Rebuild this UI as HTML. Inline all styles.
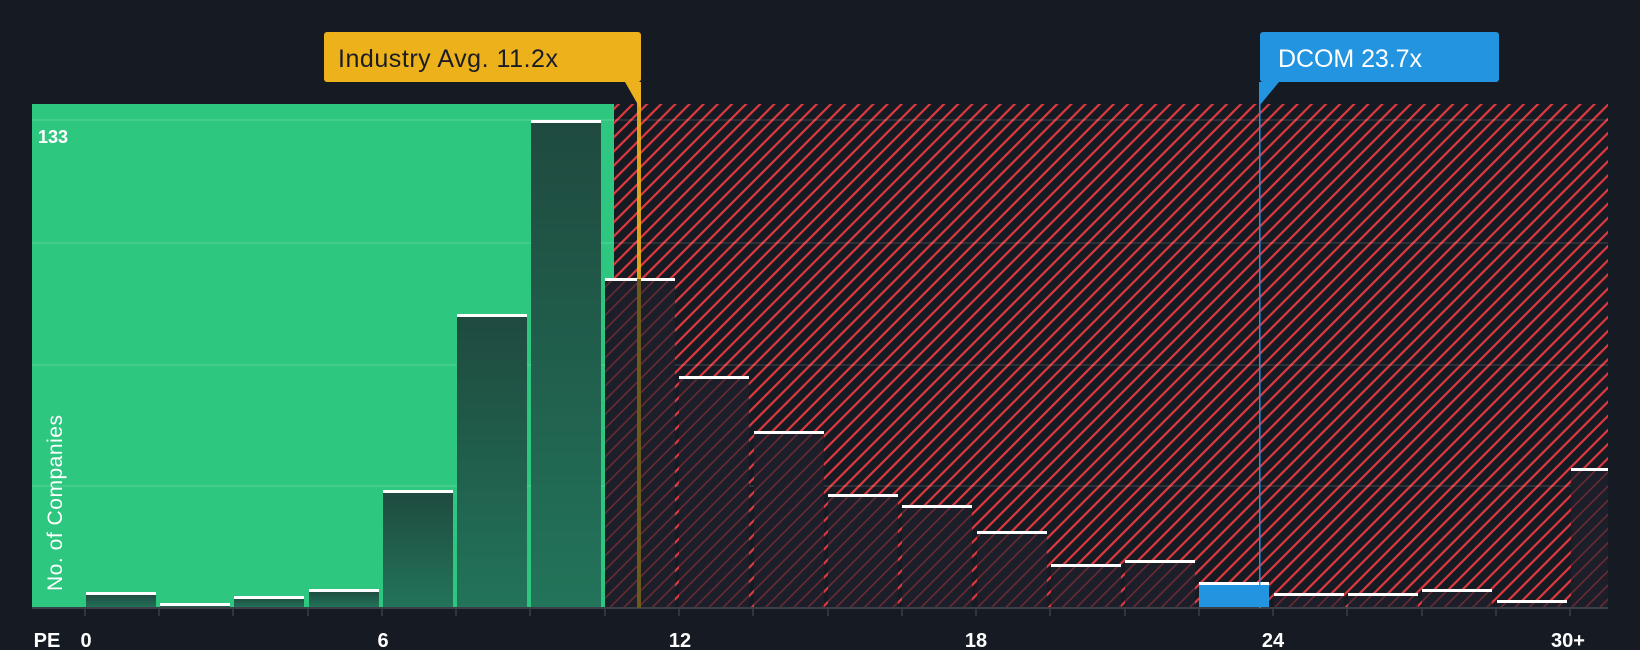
<!DOCTYPE html>
<html><head><meta charset="utf-8"><style>
html,body{margin:0;padding:0;background:#151a23;}
svg{display:block}
text{font-family:"Liberation Sans",sans-serif;}
</style></head><body>
<svg width="1640" height="650" viewBox="0 0 1640 650" xmlns="http://www.w3.org/2000/svg">
<defs>
<pattern id="h" patternUnits="userSpaceOnUse" width="10" height="10" patternTransform="rotate(45)">
<rect width="10" height="10" fill="#151a23"/>
<rect x="0" y="0" width="2.2" height="10" fill="#e0393f"/>
</pattern>
<pattern id="h2" patternUnits="userSpaceOnUse" width="10" height="10" patternTransform="rotate(45)">
<rect width="10" height="10" fill="#1c1f29"/>
<rect x="0" y="0" width="1.6" height="10" fill="#6a2a33"/>
</pattern>
<linearGradient id="g" x1="0" y1="0" x2="0" y2="1"><stop offset="0" stop-color="#1f4a3f"/><stop offset="1" stop-color="#22745a"/></linearGradient>
</defs>
<rect width="1640" height="650" fill="#151a23"/>
<rect x="32" y="104" width="582" height="504" fill="#2ec77f"/>
<rect x="614" y="104" width="994" height="504" fill="url(#h)"/>
<g stroke="#ffffff" stroke-opacity="0.1" stroke-width="2">
<line x1="32" y1="120" x2="1608" y2="120"/><line x1="32" y1="243" x2="1608" y2="243"/>
<line x1="32" y1="365" x2="1608" y2="365"/><line x1="32" y1="486" x2="1608" y2="486"/>
</g>
<g fill="url(#g)">
<rect x="86" y="594" width="70" height="14"/><rect x="160" y="605" width="70" height="3"/>
<rect x="234" y="597" width="70" height="11"/><rect x="309" y="590" width="70" height="18"/>
<rect x="383" y="491" width="70" height="117"/><rect x="457" y="315" width="70" height="293"/>
<rect x="531" y="120" width="70" height="488"/>
</g>
<g fill="url(#h2)">
<rect x="605" y="279" width="70" height="329"/><rect x="679" y="377" width="70" height="231"/>
<rect x="754" y="432" width="70" height="176"/><rect x="828" y="495" width="70" height="113"/>
<rect x="902" y="506" width="70" height="102"/><rect x="977" y="532" width="70" height="76"/>
<rect x="1051" y="565" width="70" height="43"/><rect x="1125" y="561" width="70" height="47"/>
<rect x="1274" y="594" width="70" height="14"/><rect x="1348" y="594" width="70" height="14"/>
<rect x="1422" y="590" width="70" height="18"/><rect x="1497" y="601" width="70" height="7"/>
<rect x="1571" y="469" width="37" height="139"/>
</g>
<rect x="1199" y="583" width="70" height="25" fill="#2394e0"/>
<g fill="#ffffff">
<rect x="86" y="592" width="70" height="3"/><rect x="160" y="603" width="70" height="3"/>
<rect x="234" y="596" width="70" height="3"/><rect x="309" y="589" width="70" height="3"/>
<rect x="383" y="490" width="70" height="3"/><rect x="457" y="314" width="70" height="3"/>
<rect x="531" y="120" width="70" height="3"/><rect x="605" y="278" width="70" height="3"/>
<rect x="679" y="376" width="70" height="3"/><rect x="754" y="431" width="70" height="3"/>
<rect x="828" y="494" width="70" height="3"/><rect x="902" y="505" width="70" height="3"/>
<rect x="977" y="531" width="70" height="3"/><rect x="1051" y="564" width="70" height="3"/>
<rect x="1125" y="560" width="70" height="3"/><rect x="1199" y="582" width="70" height="3"/>
<rect x="1274" y="593" width="70" height="3"/><rect x="1348" y="593" width="70" height="3"/>
<rect x="1422" y="589" width="70" height="3"/><rect x="1497" y="600" width="70" height="3"/>
<rect x="1571" y="468" width="37" height="3"/>
</g>
<rect x="32" y="607" width="1576" height="2" fill="#3a3f48"/>
<g stroke="#3a3f48" stroke-width="1.5">
<line x1="85" y1="608" x2="85" y2="616"/><line x1="159" y1="608" x2="159" y2="616"/><line x1="233" y1="608" x2="233" y2="616"/><line x1="308" y1="608" x2="308" y2="616"/><line x1="382" y1="608" x2="382" y2="616"/><line x1="456" y1="608" x2="456" y2="616"/><line x1="530" y1="608" x2="530" y2="616"/><line x1="605" y1="608" x2="605" y2="616"/><line x1="679" y1="608" x2="679" y2="616"/><line x1="753" y1="608" x2="753" y2="616"/><line x1="828" y1="608" x2="828" y2="616"/><line x1="902" y1="608" x2="902" y2="616"/><line x1="976" y1="608" x2="976" y2="616"/><line x1="1050" y1="608" x2="1050" y2="616"/><line x1="1125" y1="608" x2="1125" y2="616"/><line x1="1199" y1="608" x2="1199" y2="616"/><line x1="1273" y1="608" x2="1273" y2="616"/><line x1="1347" y1="608" x2="1347" y2="616"/><line x1="1422" y1="608" x2="1422" y2="616"/><line x1="1496" y1="608" x2="1496" y2="616"/><line x1="1570" y1="608" x2="1570" y2="616"/>
</g>
<rect x="637" y="82" width="4" height="526" fill="#ecb11b" opacity="0.9"/>
<rect x="637" y="279" width="4" height="329" fill="#6b5a1c"/>
<rect x="1259" y="82" width="1.5" height="526" fill="#2394e0"/>
<rect x="324" y="32" width="317" height="50" rx="3" fill="#ecb11b"/>
<polygon points="625,82 641,82 641,110" fill="#ecb11b"/>
<rect x="1260" y="32" width="239" height="50" rx="3" fill="#2394e0"/>
<polygon points="1260,82 1279,82 1260,105" fill="#2394e0"/>
<text x="338" y="67" font-size="25" fill="#1a1d24" textLength="220">Industry Avg. 11.2x</text>
<text x="1278" y="67" font-size="25" fill="#ffffff" textLength="144">DCOM 23.7x</text>
<text x="38" y="143" font-size="18" font-weight="bold" fill="#ffffff">133</text>
<text transform="translate(62,591) rotate(-90)" font-size="21" fill="#ffffff" textLength="176">No. of Companies</text>
<g font-size="20" font-weight="bold" fill="#ffffff" text-anchor="middle">
<text x="47" y="647">PE</text><text x="86" y="647">0</text><text x="383" y="647">6</text>
<text x="680" y="647">12</text><text x="976" y="647">18</text><text x="1273" y="647">24</text><text x="1568" y="647">30+</text>
</g>
</svg>
</body></html>
